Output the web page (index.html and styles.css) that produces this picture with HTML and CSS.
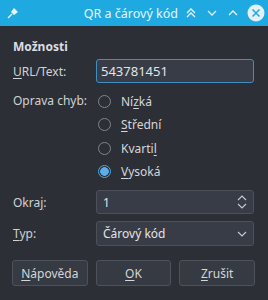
FILE: index.html
```html
<!DOCTYPE html>
<html>
  <head>
    <title>QR a čárový kód</title>
    <link rel="stylesheet" href="styles.css">
  </head>
  <body>
    <div class="window">
      <div class="titlebar">
        <svg class="pin" width="14" height="14" viewBox="0 0 14 14">
          <path d="M8 2 L12 6 L8 9 L5 6 Z" fill="#e6f5fc"/>
          <path d="M6 8 L2 12" stroke="#e6f5fc" stroke-width="1.5"/>
        </svg>
        <span class="title">QR a čárový kód</span>
        <div class="controls">
          <svg width="14" height="14" viewBox="0 0 14 14">
            <path d="M3 7 L7 3 L11 7 M3 11 L7 7 L11 11" fill="none" stroke="#e6f5fc" stroke-width="1.3"/>
          </svg>
          <svg width="14" height="14" viewBox="0 0 14 14">
            <path d="M3 5 L7 9 L11 5" fill="none" stroke="#e6f5fc" stroke-width="1.3"/>
          </svg>
          <svg width="14" height="14" viewBox="0 0 14 14">
            <path d="M3 9 L7 5 L11 9" fill="none" stroke="#e6f5fc" stroke-width="1.3"/>
          </svg>
          <svg width="18" height="18" viewBox="0 0 18 18">
            <circle cx="9" cy="9" r="8.5" fill="#e4f1f8"/>
            <path d="M5.5 5.5 L12.5 12.5 M12.5 5.5 L5.5 12.5" stroke="#1fa9e1" stroke-width="1.5"/>
          </svg>
        </div>
      </div>

      <div class="content">
        <div class="section">Možnosti</div>
        <div class="form">
          <label class="label"><u>U</u>RL/Text:</label>
          <div class="field focused">543781451</div>

          <label class="label top">Oprava chyb:</label>
          <div class="radios">
            <div class="radio"><span class="dot"></span>Ní<u>z</u>ká</div>
            <div class="radio"><span class="dot"></span><u>S</u>třední</div>
            <div class="radio"><span class="dot"></span>Kvarti<u>l</u></div>
            <div class="radio"><span class="dot checked"></span><u>V</u>ysoká</div>
          </div>

          <label class="label">Okra<u>j</u>:</label>
          <div class="field spin">
            <span>1</span>
            <svg width="12" height="18" viewBox="0 0 12 18">
              <path d="M2 7 L6 3 L10 7 M2 11 L6 15 L10 11" fill="none" stroke="#c8cbcf" stroke-width="1.1"/>
            </svg>
          </div>

          <label class="label"><u>T</u>yp:</label>
          <div class="field combo">
            <span>Čárový kód</span>
            <svg width="12" height="12" viewBox="0 0 12 12">
              <path d="M2 4 L6 8 L10 4" fill="none" stroke="#c8cbcf" stroke-width="1.1"/>
            </svg>
          </div>
        </div>

        <div class="buttons">
          <button><u>N</u>ápověda</button>
          <button><u>O</u>K</button>
          <button><u>Z</u>rušit</button>
        </div>
      </div>
    </div>
  </body>
</html>
```

FILE: styles.css
```css
body {
  margin: 0;
  padding: 0;
  background-color: #2c2f36;
  font-family: "Noto Sans", sans-serif;
  font-size: 12px;
  color: #d4d6d9;
}
.window {
  width: 268px;
  height: 300px;
}
.titlebar {
  height: 26px;
  background-color: #1fa9e1;
  display: flex;
  align-items: center;
  padding: 0 3px 0 6px;
  box-sizing: border-box;
  color: #e6f5fc;
}
.pin {
  margin-right: 8px;
}
.title {
  flex: 1;
  text-align: right;
  white-space: nowrap;
  font-size: 12.5px;
  margin-right: 6px;
}
.controls {
  display: flex;
  align-items: center;
  gap: 7px;
}
.content {
  padding: 12px 13px 0 13px;
}
.section {
  font-weight: bold;
  font-size: 12px;
  color: #dcdee1;
  height: 17px;
  line-height: 17px;
}
.form {
  display: grid;
  grid-template-columns: 83px 158px;
  row-gap: 7px;
  margin-top: 4px;
  align-items: center;
}
.label {
  color: #d0d2d5;
}
.label.top {
  align-self: start;
  line-height: 24px;
  margin-top: -1px;
}
u {
  text-decoration-thickness: 1px;
  text-underline-offset: 2px;
}
.field {
  height: 24px;
  box-sizing: border-box;
  border: 1px solid #4b505a;
  border-radius: 3px;
  background-color: #383c46;
  display: flex;
  align-items: center;
  padding: 0 6px;
  color: #e2e4e7;
}
.field.focused {
  border-color: #3d8fc4;
  padding-left: 4px;
  font-size: 13px;
}
.field.spin, .field.combo {
  justify-content: space-between;
  padding-right: 5px;
}
.field.combo {
  height: 25px;
}
.radios {
  display: flex;
  flex-direction: column;
}
.radio {
  height: 23.3px;
  display: flex;
  align-items: center;
  color: #d4d6d9;
}
.dot {
  width: 11px;
  height: 11px;
  border: 1px solid #80848b;
  border-radius: 50%;
  margin-left: 2px;
  margin-right: 10px;
}
.dot.checked {
  border-color: #3daee9;
  background: radial-gradient(circle, #5dade9 0 4px, #2c2f36 4.6px);
}
.buttons {
  display: flex;
  gap: 8px;
  margin-top: 14px;
  margin-left: -1px;
}
button {
  width: 76px;
  height: 26px;
  background-color: #363a43;
  border: 1px solid #4d525c;
  border-radius: 3px;
  color: #d4d6d9;
  font-family: "Noto Sans", sans-serif;
  font-size: 12px;
  padding: 0;
}
```
